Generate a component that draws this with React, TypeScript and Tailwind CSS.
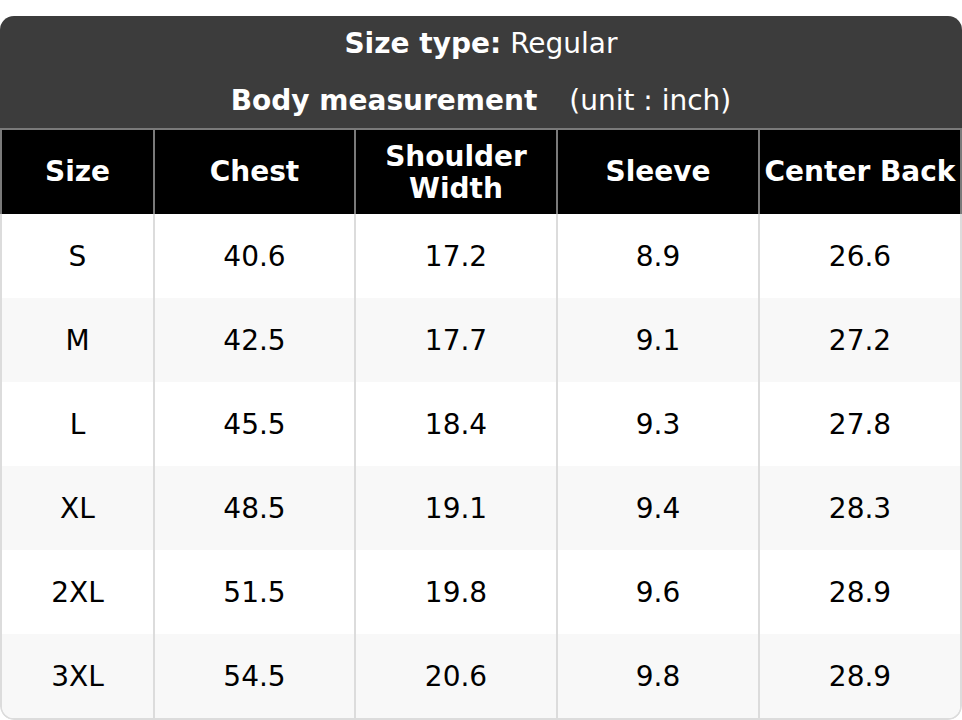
import React from "react";

interface SizeRow {
  size: string;
  chest: string;
  shoulder: string;
  sleeve: string;
  back: string;
}

const rows: SizeRow[] = [
  { size: "S", chest: "40.6", shoulder: "17.2", sleeve: "8.9", back: "26.6" },
  { size: "M", chest: "42.5", shoulder: "17.7", sleeve: "9.1", back: "27.2" },
  { size: "L", chest: "45.5", shoulder: "18.4", sleeve: "9.3", back: "27.8" },
  { size: "XL", chest: "48.5", shoulder: "19.1", sleeve: "9.4", back: "28.3" },
  { size: "2XL", chest: "51.5", shoulder: "19.8", sleeve: "9.6", back: "28.9" },
  { size: "3XL", chest: "54.5", shoulder: "20.6", sleeve: "9.8", back: "28.9" },
];

const columns = ["Size", "Chest", "Shoulder Width", "Sleeve", "Center Back"];

const gridCols = "grid grid-cols-[151px_201px_202px_202px_202px]";

const App: React.FC = () => {
  return (
    <div className="pt-4 bg-white font-['DejaVu_Sans',sans-serif]">
      <div className="rounded-[14px] overflow-hidden">
        <div className="h-[114px] bg-[#3c3c3c] text-white text-[28px] border-b-2 border-[#7a7a7a] flex flex-col">
          <div className="h-[56px] flex items-center justify-center">
            <span className="font-bold">Size type:</span>
            <span className="ml-[9px]">Regular</span>
          </div>
          <div className="h-[56px] flex items-center justify-center pt-[2px]">
            <span className="font-bold">Body measurement</span>
            <span className="ml-[32px]">(unit : inch)</span>
          </div>
        </div>

        <div className={`${gridCols} h-[84px] bg-black text-white text-[28px] font-bold leading-[32px] border-x-2 border-[#7a7a7a]`}>
          {columns.map((col, i) => (
            <div
              key={col}
              className={`flex items-center justify-center text-center ${i > 0 ? "border-l-2 border-[#7a7a7a]" : ""}`}
            >
              {col === "Shoulder Width" ? (
                <span className="pt-[2px]">
                  Shoulder
                  <br />
                  Width
                </span>
              ) : (
                <span className="whitespace-nowrap">{col}</span>
              )}
            </div>
          ))}
        </div>

        <div className="border-x-2 border-b-2 border-[#dcdcdc] rounded-b-[14px] overflow-hidden">
          {rows.map((row, idx) => (
            <div
              key={row.size}
              className={`${gridCols} h-[84px] text-[28px] text-black ${idx % 2 === 1 ? "bg-[#f8f8f8]" : "bg-white"}`}
            >
              {[row.size, row.chest, row.shoulder, row.sleeve, row.back].map((val, i) => (
                <div
                  key={i}
                  className={`flex items-center justify-center pt-[2px] ${i > 0 ? "border-l-2 border-[#dcdcdc]" : ""}`}
                >
                  {val}
                </div>
              ))}
            </div>
          ))}
        </div>
      </div>
    </div>
  );
};

export default App;
